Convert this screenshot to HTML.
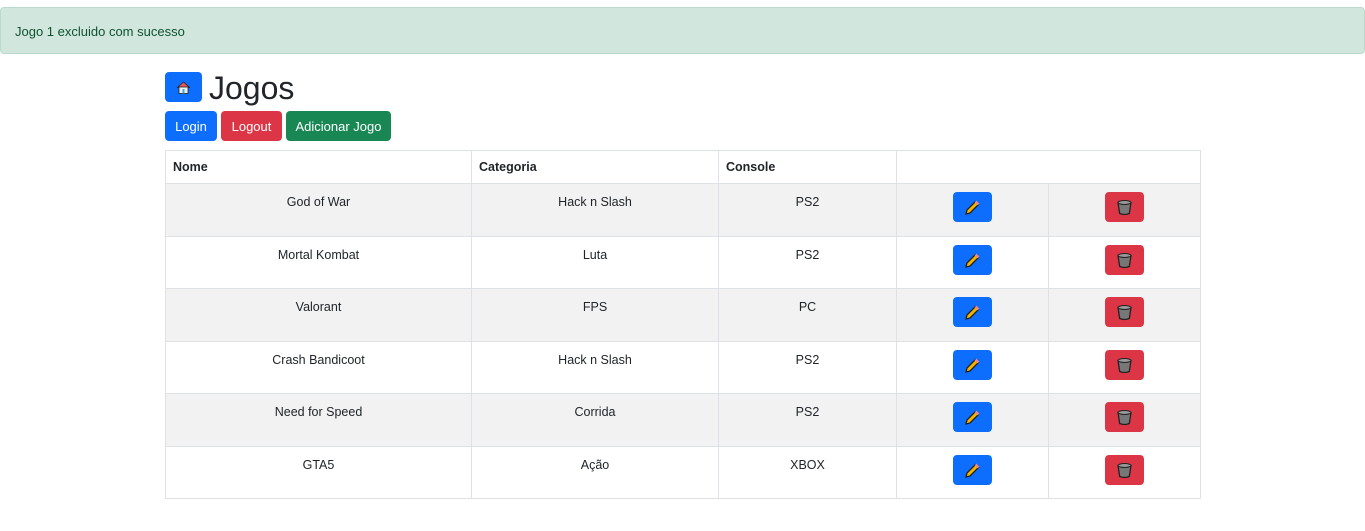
<!DOCTYPE html>
<html><head><meta charset="utf-8"><style>
body{margin:0;font-family:"Liberation Sans",sans-serif;color:#212529;background:#fff;width:1365px;height:531px;overflow:hidden;position:relative}
.alert{position:absolute;left:0;top:7px;width:1363px;height:45px;background:#d1e7dd;border:1px solid #badbcc;border-radius:4px;color:#0f5132;font-size:13px;line-height:47px}
.alert span{margin-left:14px}
.home{position:absolute;left:165px;top:72px;width:37px;height:30px;background:#0d6efd;border-radius:4px}
h1{position:absolute;left:209px;top:68px;margin:0;font-size:32px;font-weight:500;line-height:40px}
.btn{position:absolute;top:111px;height:30px;border-radius:4px;color:#fff;font-size:13px;line-height:32px;text-align:center}
table{position:absolute;left:165px;top:150px;border-collapse:collapse;font-size:12.5px;table-layout:fixed;width:1036px}
td,th{border:1px solid #dee2e6;padding:0 7px;vertical-align:top}
th{height:32px;text-align:left;font-weight:bold;line-height:32px;box-sizing:border-box;padding-top:0;padding-bottom:0}
tr.s td{background:#f2f2f2}
td{height:52.5px;text-align:center;line-height:20px;padding-top:8px;box-sizing:border-box}
.ib{display:inline-block;width:39px;height:30px;border-radius:4px;vertical-align:top}
.e{background:#0d6efd}.d{background:#dc3545}
.ib svg{display:block}
</style></head><body>
<div class="alert"><span>Jogo 1 excluido com sucesso</span></div>
<div class="home"><svg width="37" height="30" viewBox="0 0 37 30"><path d="M12.5 15.5 L18.5 10 L24.5 15.5 Z" fill="#e55" stroke="#222" stroke-width="0.8"/><rect x="14" y="15" width="9" height="6.5" fill="#eee" stroke="#222" stroke-width="0.8"/><rect x="17.5" y="17" width="2" height="4.5" fill="#4ac"/></svg></div>
<h1>Jogos</h1>
<div class="btn" style="left:165px;width:52px;background:#0d6efd">Login</div>
<div class="btn" style="left:221px;width:61px;background:#dc3545">Logout</div>
<div class="btn" style="left:286px;width:105px;background:#198754">Adicionar Jogo</div>
<table>
<colgroup><col style="width:306px"><col style="width:247px"><col style="width:178px"><col style="width:152px"><col style="width:152px"></colgroup>
<tr><th>Nome</th><th>Categoria</th><th>Console</th><th colspan="2"></th></tr>
<tr class="s"><td>God of War</td><td>Hack n Slash</td><td>PS2</td><td><span class="ib e"><svg width="39" height="30"><path d="M13 22 L14 18 L22.5 9.5 L25.5 12.5 L17 21 Z" fill="#f5b400" stroke="#222" stroke-width="1.3"/><path d="M22.5 9.5 L25.5 12.5" stroke="#e88" stroke-width="2.5"/></svg></span></td><td><span class="ib d"><svg width="39" height="30"><path d="M13 10.5 H26 L24.3 21.5 Q19.5 23.5 14.7 21.5 Z" fill="#777" stroke="#222" stroke-width="1.3"/><ellipse cx="19.5" cy="10.5" rx="6.5" ry="2" fill="#999" stroke="#222" stroke-width="1"/></svg></span></td></tr>
<tr><td>Mortal Kombat</td><td>Luta</td><td>PS2</td><td><span class="ib e"><svg width="39" height="30"><path d="M13 22 L14 18 L22.5 9.5 L25.5 12.5 L17 21 Z" fill="#f5b400" stroke="#222" stroke-width="1.3"/><path d="M22.5 9.5 L25.5 12.5" stroke="#e88" stroke-width="2.5"/></svg></span></td><td><span class="ib d"><svg width="39" height="30"><path d="M13 10.5 H26 L24.3 21.5 Q19.5 23.5 14.7 21.5 Z" fill="#777" stroke="#222" stroke-width="1.3"/><ellipse cx="19.5" cy="10.5" rx="6.5" ry="2" fill="#999" stroke="#222" stroke-width="1"/></svg></span></td></tr>
<tr class="s"><td>Valorant</td><td>FPS</td><td>PC</td><td><span class="ib e"><svg width="39" height="30"><path d="M13 22 L14 18 L22.5 9.5 L25.5 12.5 L17 21 Z" fill="#f5b400" stroke="#222" stroke-width="1.3"/><path d="M22.5 9.5 L25.5 12.5" stroke="#e88" stroke-width="2.5"/></svg></span></td><td><span class="ib d"><svg width="39" height="30"><path d="M13 10.5 H26 L24.3 21.5 Q19.5 23.5 14.7 21.5 Z" fill="#777" stroke="#222" stroke-width="1.3"/><ellipse cx="19.5" cy="10.5" rx="6.5" ry="2" fill="#999" stroke="#222" stroke-width="1"/></svg></span></td></tr>
<tr><td>Crash Bandicoot</td><td>Hack n Slash</td><td>PS2</td><td><span class="ib e"><svg width="39" height="30"><path d="M13 22 L14 18 L22.5 9.5 L25.5 12.5 L17 21 Z" fill="#f5b400" stroke="#222" stroke-width="1.3"/><path d="M22.5 9.5 L25.5 12.5" stroke="#e88" stroke-width="2.5"/></svg></span></td><td><span class="ib d"><svg width="39" height="30"><path d="M13 10.5 H26 L24.3 21.5 Q19.5 23.5 14.7 21.5 Z" fill="#777" stroke="#222" stroke-width="1.3"/><ellipse cx="19.5" cy="10.5" rx="6.5" ry="2" fill="#999" stroke="#222" stroke-width="1"/></svg></span></td></tr>
<tr class="s"><td>Need for Speed</td><td>Corrida</td><td>PS2</td><td><span class="ib e"><svg width="39" height="30"><path d="M13 22 L14 18 L22.5 9.5 L25.5 12.5 L17 21 Z" fill="#f5b400" stroke="#222" stroke-width="1.3"/><path d="M22.5 9.5 L25.5 12.5" stroke="#e88" stroke-width="2.5"/></svg></span></td><td><span class="ib d"><svg width="39" height="30"><path d="M13 10.5 H26 L24.3 21.5 Q19.5 23.5 14.7 21.5 Z" fill="#777" stroke="#222" stroke-width="1.3"/><ellipse cx="19.5" cy="10.5" rx="6.5" ry="2" fill="#999" stroke="#222" stroke-width="1"/></svg></span></td></tr>
<tr><td>GTA5</td><td>Ação</td><td>XBOX</td><td><span class="ib e"><svg width="39" height="30"><path d="M13 22 L14 18 L22.5 9.5 L25.5 12.5 L17 21 Z" fill="#f5b400" stroke="#222" stroke-width="1.3"/><path d="M22.5 9.5 L25.5 12.5" stroke="#e88" stroke-width="2.5"/></svg></span></td><td><span class="ib d"><svg width="39" height="30"><path d="M13 10.5 H26 L24.3 21.5 Q19.5 23.5 14.7 21.5 Z" fill="#777" stroke="#222" stroke-width="1.3"/><ellipse cx="19.5" cy="10.5" rx="6.5" ry="2" fill="#999" stroke="#222" stroke-width="1"/></svg></span></td></tr>
</table>
</body></html>
